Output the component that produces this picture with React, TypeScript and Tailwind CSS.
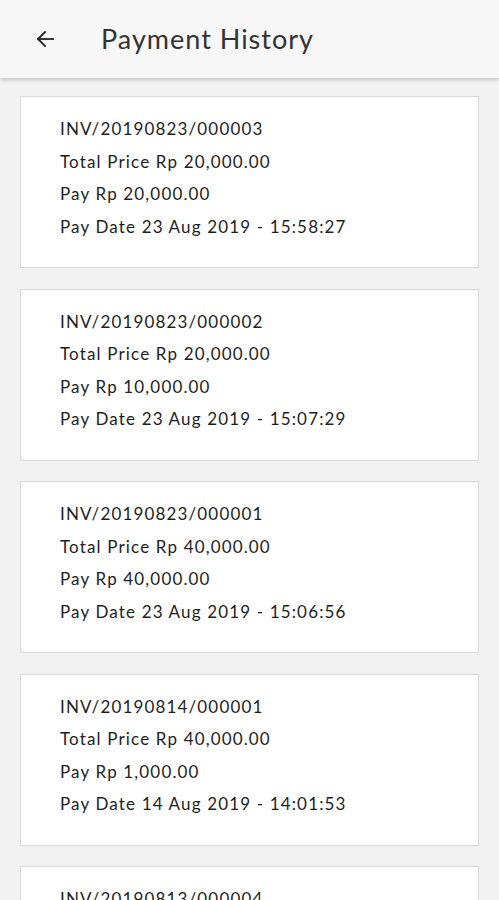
import React from "react";

const items = [
  { inv: "INV/20190823/000003", total: "20,000.00", pay: "20,000.00", date: "23 Aug 2019 - 15:58:27" },
  { inv: "INV/20190823/000002", total: "20,000.00", pay: "10,000.00", date: "23 Aug 2019 - 15:07:29" },
  { inv: "INV/20190823/000001", total: "40,000.00", pay: "40,000.00", date: "23 Aug 2019 - 15:06:56" },
  { inv: "INV/20190814/000001", total: "40,000.00", pay: "1,000.00", date: "14 Aug 2019 - 14:01:53" },
  { inv: "INV/20190813/000004", total: "40,000.00", pay: "1,000.00", date: "13 Aug 2019 - 10:01:53" },
];

export default function App() {
  return (
    <div
      className="w-[499px] h-[900px] overflow-hidden bg-[#f2f2f2] flex flex-col"
      style={{ fontFamily: "Lato, 'Open Sans', sans-serif" }}
    >
      <div className="h-[78px] shrink-0 bg-[#f7f7f7] flex items-center shadow-[0_2px_4px_rgba(0,0,0,0.18)] relative z-10">
        <div className="w-[101px] flex items-center pl-[33px]">
          <svg width="24" height="24" viewBox="0 0 24 24" fill="none" stroke="#222" strokeWidth="1.8" strokeLinecap="square">
            <path d="M20 12H5" />
            <path d="M12 5l-7 7 7 7" />
          </svg>
        </div>
        <div className="text-[27px] text-[#333] tracking-[1px] leading-none pb-[1px]">Payment History</div>
      </div>
      <div className="flex flex-col gap-[20.5px] px-[20px] pt-[18px]">
        {items.map((it) => (
          <div
            key={it.inv}
            className="shrink-0 bg-white border border-[#d9d9d9] h-[172px] pl-[39px] pt-[16px] text-[17px] text-[#1e1e1e] tracking-[1.15px] leading-[32.6px] whitespace-nowrap"
          >
            <div>{it.inv}</div>
            <div>Total Price Rp {it.total}</div>
            <div>Pay Rp {it.pay}</div>
            <div>Pay Date {it.date}</div>
          </div>
        ))}
      </div>
    </div>
  );
}
